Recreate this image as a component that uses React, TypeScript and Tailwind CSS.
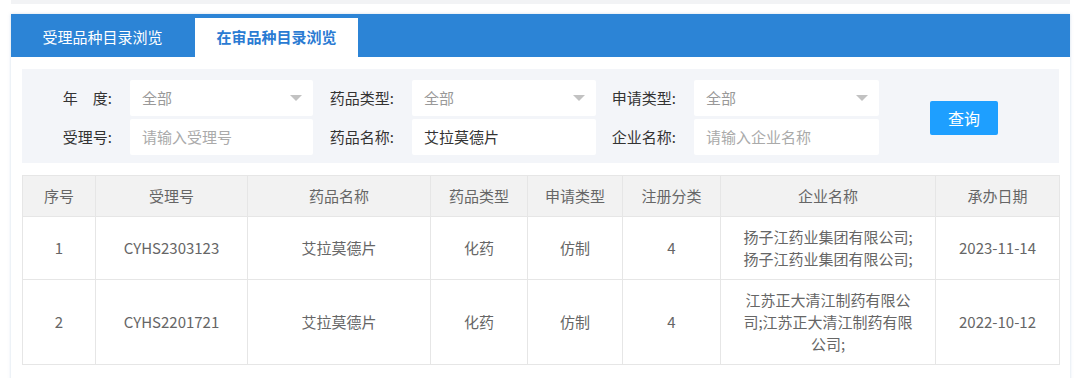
import React from 'react';

const columns = [
  { title: '序号', width: 73 },
  { title: '受理号', width: 152 },
  { title: '药品名称', width: 183 },
  { title: '药品类型', width: 97 },
  { title: '申请类型', width: 95 },
  { title: '注册分类', width: 98 },
  { title: '企业名称', width: 215 },
  { title: '承办日期', width: 124 },
];

const rows = [
  ['1', 'CYHS2303123', '艾拉莫德片', '化药', '仿制', '4', '扬子江药业集团有限公司;扬子江药业集团有限公司;', '2023-11-14'],
  ['2', 'CYHS2201721', '艾拉莫德片', '化药', '仿制', '4', '江苏正大清江制药有限公司;江苏正大清江制药有限公司;', '2022-10-12'],
];

function Caret() {
  return <span className="w-0 h-0 border-l-[6px] border-r-[6px] border-t-[6px] border-l-transparent border-r-transparent border-t-[#c2c2c2]" />;
}

function SelectBox({ width, value }: { width: number; value: string }) {
  return (
    <div
      className="h-[36px] bg-white rounded-[2px] flex items-center justify-between pl-[12px] pr-[11px] text-[#999]"
      style={{ width }}
    >
      <span>{value}</span>
      <Caret />
    </div>
  );
}

function InputBox({ width, value, placeholder }: { width: number; value?: string; placeholder?: string }) {
  return (
    <div className="h-[36px] bg-white rounded-[2px] flex items-center pl-[12px]" style={{ width }}>
      {value ? <span className="text-[#333]">{value}</span> : <span className="text-[#aaa]">{placeholder}</span>}
    </div>
  );
}

function Label({ width, text }: { width: number; text: string }) {
  return (
    <div className="h-[36px] flex items-center justify-end pr-[18px] text-[#333] whitespace-pre" style={{ width }}>
      {text}
    </div>
  );
}

export default function App() {
  return (
    <div
      className="w-[1080px] h-[378px] bg-white overflow-hidden text-[15px]"
      style={{ fontFamily: '"Noto Sans CJK SC", "Noto Sans", sans-serif' }}
    >
      <div className="ml-[11px] w-[1059px] h-[4px] bg-[#f2f3f5]" />

      <div className="ml-[11px] mt-[10px] w-[1059px] h-[400px] bg-white shadow-[0_0_3px_rgba(190,205,225,0.7)]">
        {/* Tabs */}
        <div className="h-[43px] bg-[#2c84d6] flex items-end">
          <div className="ml-[10px] w-[163px] h-[39px] flex items-center justify-center text-white">
            受理品种目录浏览
          </div>
          <div className="ml-[11px] w-[163px] h-[39px] bg-white flex items-center justify-center text-[#2a7bd3] font-bold">
            在审品种目录浏览
          </div>
        </div>

        <div className="px-[11px] pt-[12px]">
          {/* Filter */}
          <div className="h-[94px] bg-[#f3f5f9] flex items-start pt-[11px]">
            <div className="flex flex-col gap-[3px]">
              <div className="flex items-center">
                <Label width={108} text={'年　度:'} />
                <SelectBox width={183} value="全部" />
                <Label width={99} text="药品类型:" />
                <SelectBox width={184} value="全部" />
                <Label width={98} text="申请类型:" />
                <SelectBox width={185} value="全部" />
              </div>
              <div className="flex items-center">
                <Label width={108} text="受理号:" />
                <InputBox width={183} placeholder="请输入受理号" />
                <Label width={99} text="药品名称:" />
                <InputBox width={184} value="艾拉莫德片" />
                <Label width={98} text="企业名称:" />
                <InputBox width={185} placeholder="请输入企业名称" />
              </div>
            </div>
            <button className="ml-[51px] mt-[21px] w-[68px] h-[34px] bg-[#1e9fff] rounded-[2px] text-white text-[16px]">
              查询
            </button>
          </div>

          {/* Table */}
          <table className="mt-[12px] w-[1037px] table-fixed border-collapse text-[#666] text-center leading-[22px]">
            <colgroup>
              {columns.map((c) => (
                <col key={c.title} style={{ width: c.width }} />
              ))}
            </colgroup>
            <thead>
              <tr className="bg-[#f2f2f2]">
                {columns.map((c) => (
                  <th key={c.title} className="border border-[#e6e6e6] py-[9px] font-normal">
                    {c.title}
                  </th>
                ))}
              </tr>
            </thead>
            <tbody>
              {rows.map((r) => (
                <tr key={r[0]}>
                  {r.map((cell, i) => (
                    <td key={i} className={`border border-[#e6e6e6] py-[9px] ${i === 6 ? 'px-[20px]' : 'px-[8px]'}`}>
                      {cell}
                    </td>
                  ))}
                </tr>
              ))}
            </tbody>
          </table>
        </div>
      </div>
    </div>
  );
}
